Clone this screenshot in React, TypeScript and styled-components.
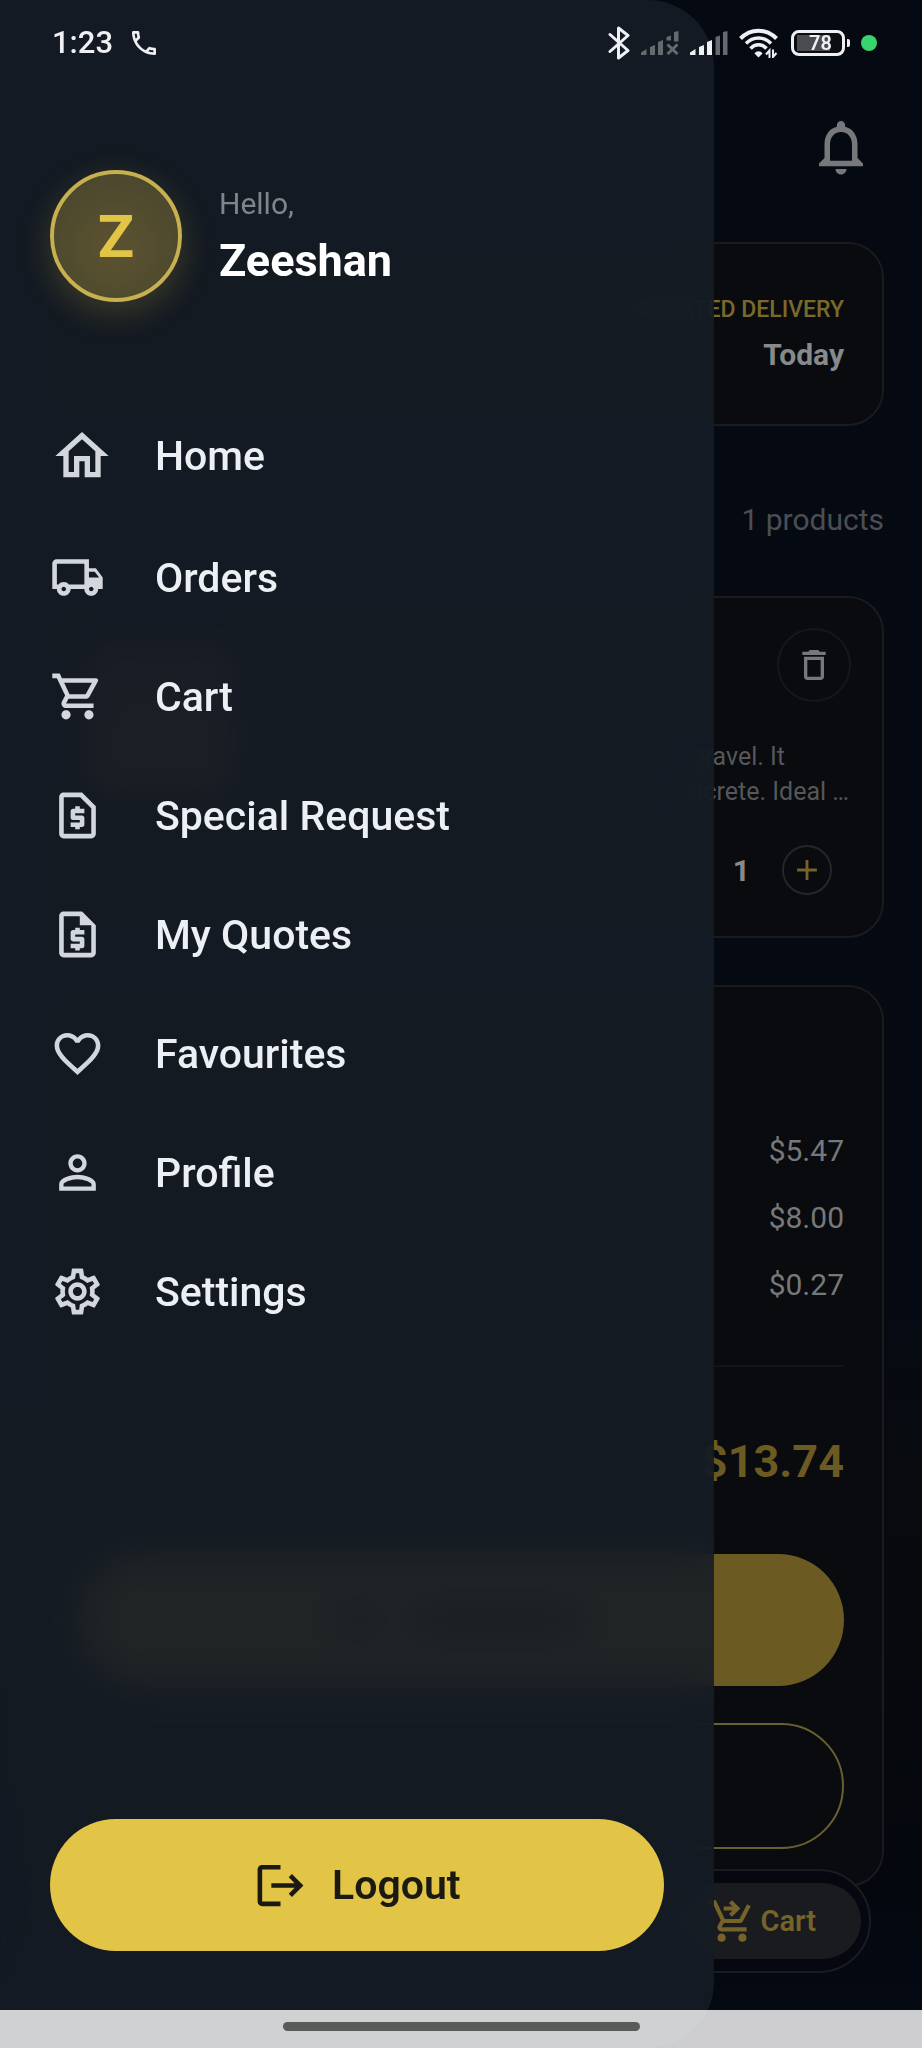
import React from "react";
import styled, { createGlobalStyle } from "styled-components";
import {
  MdDeleteOutline,
  MdFavoriteBorder,
  MdLogout,
  MdNotificationsNone,
  MdAdd,
  MdOutlineHome,
  MdOutlineLocalShipping,
  MdOutlinePersonOutline,
  MdOutlinePhone,
  MdOutlineRequestPage,
  MdOutlineRequestQuote,
  MdOutlineSettings,
  MdOutlineShoppingCart,
  MdOutlineShoppingCartCheckout,
} from "react-icons/md";

const gold = "#e2c547";
const dimGold = "#6b5a22";
const line = "#191b1e";

const GlobalStyle = createGlobalStyle`
  *, *::before, *::after { box-sizing: border-box; }
  body { margin: 0; background: #060910; font-family: Roboto, "Liberation Sans", sans-serif; }
  button { font: inherit; border: 0; padding: 0; background: none; cursor: pointer; }
  a { color: inherit; text-decoration: none; }
  svg { display: block; flex-shrink: 0; }
`;

const Screen = styled.div`
  position: relative;
  min-height: 100vh;
  overflow: hidden;
  background: linear-gradient(#050911 0%, #060a12 65%, #090a0d 75%, #04070e 92%, #050a14 100%);
`;

/* ---------- status bar ---------- */

const StatusBar = styled.div`
  position: absolute;
  z-index: 3;
  inset: 0 0 auto 0;
  display: flex;
  align-items: center;
  justify-content: space-between;
  padding: 22px 45px 0 52px;
  height: 64px;
  color: #eef0f4;
`;

const StatusGroup = styled.div<{ $gap: number }>`
  display: flex;
  align-items: center;
  gap: ${(p) => p.$gap}px;
`;

const Clock = styled.time`
  font-size: 31px;
  line-height: 40px;
  font-weight: 500;
`;

const Battery = styled.div`
  display: flex;
  align-items: center;
  gap: 2px;
  &::after {
    content: "";
    width: 3px;
    height: 8px;
    border-radius: 0 2px 2px 0;
    background: #eef0f4;
  }
`;

const BatteryCell = styled.div`
  width: 54px;
  height: 26px;
  padding-left: 5px;
  border: 3px solid #eef0f4;
  border-radius: 8px;
  background: linear-gradient(#4b4c50, #4b4c50) 3px 50% / 33px 16px no-repeat, #0b0d12;
  text-align: center;
  font-size: 20px;
  line-height: 20px;
  font-weight: 600;
`;

const CallDot = styled.i`
  width: 16px;
  height: 16px;
  border-radius: 50%;
  background: #38d46c;
`;

function BluetoothIcon() {
  return (
    <svg width="22" height="34" viewBox="0 0 22 34" fill="none" stroke="currentColor" strokeWidth="3" strokeLinejoin="round" strokeLinecap="round">
      <path d="M2 8.500L20 24.500L10.500 32V2L20 9.500L2 25.500" />
    </svg>
  );
}

function SignalIcon({ off = false }: { off?: boolean }) {
  const dim = "#66696d";
  return (
    <svg width="38" height="24" viewBox="0 0 38 24" fill={off ? dim : "currentColor"}>
      <path d="M0 24V21.500L5.500 18V24Z" />
      <path d="M9 24V16L14 14V24Z" />
      <path d="M17 24V11L22 9V24Z" />
      {off ? (
        <g>
          <path d="M25.500 9.500V6L30 4.500V9.500Z" />
          <path d="M33 10.500V1L37.500 0V10.500Z" />
          <path d="M26.500 13.500L36.500 23M36.500 13.500L26.500 23" stroke={dim} strokeWidth="3" />
        </g>
      ) : (
        <g fill={dim}>
          <path d="M25.500 24V6L30 4.500V24Z" />
          <path d="M33 24V1L37.500 0V24Z" />
        </g>
      )}
    </svg>
  );
}

function WifiIcon() {
  return (
    <svg width="41" height="30" viewBox="0 0 41 30" fill="none" stroke="currentColor">
      <path d="M1.500 10.500C11.500 0 27.500 0 37.500 10.500" strokeWidth="4" />
      <path d="M7 15.500C14 8 25 8 32 15.500" strokeWidth="3.500" />
      <path d="M11.500 20.500C16 15.500 23 15.500 27.500 20.500" strokeWidth="3.500" />
      <path d="M19.500 29.500L15.500 25.500C17.500 22.500 21.500 22.500 23.500 25.500Z" fill="currentColor" stroke="none" />
      <path d="M30.500 30V22.500L27 26.500M34 21.500V29L37.500 25" strokeWidth="2" />
    </svg>
  );
}

/* ---------- page behind the drawer ---------- */

const Page = styled.main`
  display: flex;
  flex-direction: column;
  padding: 114px 38px 140px;
`;

const Header = styled.header`
  display: flex;
  justify-content: flex-end;
  padding-right: 10px;
  margin-bottom: 62px;
`;

const IconButton = styled.button`
  display: flex;
  color: #77787b;
`;

const Card = styled.section`
  display: flex;
  flex-direction: column;
  border: 2px solid ${line};
  border-radius: 36px;
  background: #090b0e;
`;

const DeliveryCard = styled(Card)`
  align-items: flex-end;
  justify-content: center;
  gap: 10px;
  height: 184px;
  padding: 2px 38px 0;
`;

const DeliveryLabel = styled.span`
  color: #796a2b;
  font-size: 23px;
  line-height: 30px;
  font-weight: 500;
`;

const DeliveryDay = styled.strong`
  color: #88898b;
  font-size: 30px;
  line-height: 40px;
  font-weight: 700;
`;

const ProductCount = styled.p`
  margin: 74px 0 56px;
  text-align: right;
  color: #4b4e54;
  font-size: 30px;
  line-height: 40px;
`;

const ProductCard = styled(Card)`
  position: relative;
  align-items: flex-end;
  padding: 30px 31px 41px;
  margin-bottom: 47px;
`;

const ProductImage = styled.div`
  position: absolute;
  left: 46px;
  top: 46px;
  width: 150px;
  height: 150px;
  border-radius: 24px;
  background: linear-gradient(#3e2326, #4a2f20);
`;

const RoundButton = styled(IconButton)<{ $size: number; $line: string }>`
  align-items: center;
  justify-content: center;
  width: ${(p) => p.$size}px;
  height: ${(p) => p.$size}px;
  border: 2px solid ${(p) => p.$line};
  border-radius: 50%;
`;

const Description = styled.p`
  display: flex;
  flex-direction: column;
  align-items: flex-end;
  margin: 37px 0 36px;
  color: #55575a;
  font-size: 25px;
  line-height: 35px;
`;

const DescriptionLine = styled.span<{ $rag: number }>`
  padding-right: ${(p) => p.$rag}px;
`;

const Quantity = styled.div`
  display: flex;
  align-items: center;
  gap: 32px;
  padding-right: 19px;
  color: #88898b;
  font-size: 30px;
  font-weight: 700;
`;

const SummaryCard = styled(Card)`
  padding: 130px 38px 36px;
`;

const Price = styled.span`
  text-align: right;
  color: #77787a;
  font-size: 30px;
  line-height: 67px;
`;

const Divider = styled.hr`
  width: 100%;
  margin: 47px 0 65px;
  border: 0;
  border-top: 2px solid #121416;
`;

const Total = styled.strong`
  text-align: right;
  color: ${dimGold};
  font-size: 45px;
  line-height: 60px;
  font-weight: 700;
  margin-bottom: 62px;
`;

const CheckoutButton = styled.button`
  display: flex;
  align-items: center;
  justify-content: center;
  gap: 34px;
  height: 132px;
  margin-bottom: 37px;
  border-radius: 66px;
  background: ${dimGold};
`;

const ButtonMark = styled.i<{ $width: number }>`
  width: ${(p) => p.$width}px;
  height: 30px;
  border-radius: 8px;
  background: #2c2716;
`;

const OutlineButton = styled.button`
  height: 126px;
  border: 2px solid #6a5f30;
  border-radius: 63px;
`;

const TabBar = styled.nav`
  position: absolute;
  inset: auto 51px 75px 51px;
  display: flex;
  justify-content: flex-end;
  padding: 12px 8px;
  border: 2px solid #1a1c20;
  border-radius: 52px;
  background: #050810;
`;

const Tab = styled.a`
  display: flex;
  align-items: center;
  gap: 4px;
  height: 76px;
  padding: 0 45px;
  border-radius: 38px;
  background: #191b1f;
  color: #75632a;
  font-size: 29px;
  font-weight: 600;
`;

/* ---------- drawer ---------- */

const Drawer = styled.aside`
  position: absolute;
  z-index: 1;
  inset: 0 auto 0 0;
  display: flex;
  flex-direction: column;
  width: 77.4%;
  padding: 170px 50px 97px;
  border-radius: 0 66px 66px 0;
  background: rgba(22, 29, 38, 0.88);
  backdrop-filter: blur(18px);
`;

const Account = styled.div`
  display: flex;
  align-items: center;
  gap: 37px;
  margin-bottom: 91px;
`;

const Avatar = styled.div`
  display: flex;
  align-items: center;
  justify-content: center;
  width: 132px;
  height: 132px;
  border: 4px solid #c6b04f;
  border-radius: 50%;
  background: radial-gradient(circle at 50% 60%, #58502f 20%, #4b472e 80%);
  box-shadow: 0 10px 32px rgba(226, 197, 71, 0.2);
  color: ${gold};
  font-size: 60px;
  font-weight: 700;
`;

const Greeting = styled.div`
  display: flex;
  flex-direction: column;
  gap: 9px;
`;

const Hello = styled.span`
  color: #80848b;
  font-size: 30px;
  line-height: 40px;
`;

const UserName = styled.strong`
  color: #ffffff;
  font-size: 45px;
  line-height: 56px;
  font-weight: 700;
`;

const Menu = styled.nav`
  display: flex;
  flex-direction: column;
`;

const MenuLink = styled.a<{ $tall?: boolean }>`
  display: flex;
  align-items: center;
  gap: 49px;
  height: ${(p) => (p.$tall ? 125 : 119)}px;
  color: #eceff4;
  font-size: 41px;
  line-height: 48px;
  font-weight: 500;
`;

const MenuIcon = styled.span`
  display: flex;
  width: 56px;
  color: #d3d6dc;
`;

const LogoutButton = styled.button`
  display: flex;
  align-items: center;
  justify-content: center;
  gap: 24px;
  height: 132px;
  margin-top: auto;
  border-radius: 66px;
  background: ${gold};
  color: #1a1a12;
  font-size: 41px;
  line-height: 48px;
  font-weight: 600;
`;

const GestureBar = styled.div`
  position: absolute;
  z-index: 2;
  inset: auto 0 0 0;
  display: flex;
  justify-content: center;
  padding-top: 12px;
  height: 38px;
  background: rgba(255, 255, 255, 0.8);
`;

const GestureHandle = styled.i`
  width: 357px;
  height: 9px;
  border-radius: 5px;
  background: #595b5a;
`;

const menu = [
  { label: "Home", Icon: MdOutlineHome, tall: true },
  { label: "Orders", Icon: MdOutlineLocalShipping },
  { label: "Cart", Icon: MdOutlineShoppingCart },
  { label: "Special Request", Icon: MdOutlineRequestPage },
  { label: "My Quotes", Icon: MdOutlineRequestQuote },
  { label: "Favourites", Icon: MdFavoriteBorder },
  { label: "Profile", Icon: MdOutlinePersonOutline },
  { label: "Settings", Icon: MdOutlineSettings },
];

const prices = ["$5.47", "$8.00", "$0.27"];

export default function App() {
  return (
    <Screen>
      <GlobalStyle />

      <Page>
        <Header>
          <IconButton aria-label="Notifications">
            <MdNotificationsNone size={66} />
          </IconButton>
        </Header>

        <DeliveryCard>
          <DeliveryLabel>ESTIMATED DELIVERY</DeliveryLabel>
          <DeliveryDay>Today</DeliveryDay>
        </DeliveryCard>

        <ProductCount>1 products</ProductCount>

        <ProductCard>
          <ProductImage />
          <RoundButton $size={74} $line="#15171a" aria-label="Remove product">
            <MdDeleteOutline size={40} />
          </RoundButton>
          <Description>
            <DescriptionLine $rag={66}>gravel. It</DescriptionLine>
            <DescriptionLine $rag={2}>concrete. Ideal …</DescriptionLine>
          </Description>
          <Quantity>
            <span>1</span>
            <RoundButton $size={50} $line="#242629" aria-label="Add one">
              <MdAdd size={34} color="#75632a" />
            </RoundButton>
          </Quantity>
        </ProductCard>

        <SummaryCard>
          {prices.map((price) => (
            <Price key={price}>{price}</Price>
          ))}
          <Divider />
          <Total>$13.74</Total>
          <CheckoutButton aria-label="Checkout">
            <ButtonMark $width={36} />
            <ButtonMark $width={170} />
          </CheckoutButton>
          <OutlineButton aria-label="Continue shopping" />
        </SummaryCard>
      </Page>

      <TabBar>
        <Tab href="#cart">
          <MdOutlineShoppingCartCheckout size={50} />
          Cart
        </Tab>
      </TabBar>

      <Drawer>
        <Account>
          <Avatar>Z</Avatar>
          <Greeting>
            <Hello>Hello,</Hello>
            <UserName>Zeeshan</UserName>
          </Greeting>
        </Account>
        <Menu>
          {menu.map(({ label, Icon, tall }) => (
            <MenuLink key={label} href="#" $tall={tall}>
              <MenuIcon>
                <Icon size={tall ? 64 : 55} />
              </MenuIcon>
              {label}
            </MenuLink>
          ))}
        </Menu>
        <LogoutButton>
          <MdLogout size={55} />
          Logout
        </LogoutButton>
      </Drawer>

      <StatusBar>
        <StatusGroup $gap={15}>
          <Clock>1:23</Clock>
          <MdOutlinePhone size={32} />
        </StatusGroup>
        <StatusGroup $gap={11}>
          <BluetoothIcon />
          <SignalIcon off />
          <SignalIcon />
          <WifiIcon />
          <Battery>
            <BatteryCell>78</BatteryCell>
          </Battery>
          <CallDot />
        </StatusGroup>
      </StatusBar>

      <GestureBar>
        <GestureHandle />
      </GestureBar>
    </Screen>
  );
}
